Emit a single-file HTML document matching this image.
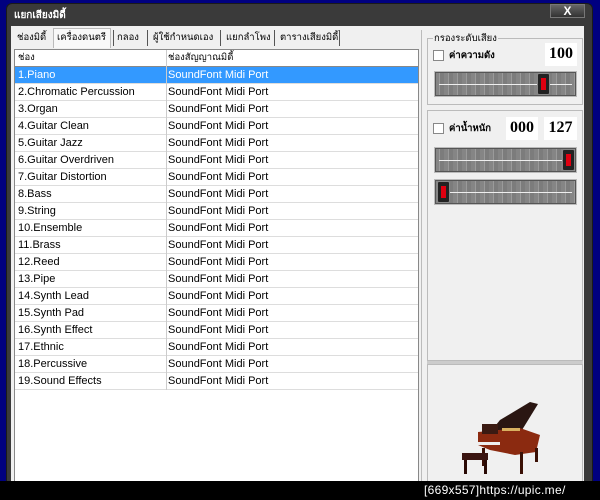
<!DOCTYPE html>
<html><head><meta charset="utf-8"><style>
*{margin:0;padding:0;box-sizing:border-box}
body{width:600px;height:500px;background:#000080;position:relative;overflow:hidden;font-family:"Liberation Sans","Noto Sans CJK SC",sans-serif;font-size:11px;color:#000}
.abs{position:absolute}
.th10{font-size:9.5px;white-space:nowrap}
#win{left:6px;top:3px;width:587px;height:490px;background:#3a3a3a;border-radius:6px 6px 0 0;border:1px solid #1a1a1a}
#title{left:14px;top:8px;color:#fff;font-weight:bold;font-size:10px}
#close{left:550px;top:4px;width:35px;height:14px;background:linear-gradient(#666,#333);border:1px solid #777;color:#fff;font-weight:bold;text-align:center;line-height:12px;font-size:12px}
#body{left:11px;top:26px;width:573px;height:460px;background:#f0f0f0}
.tab{top:31px;height:16px;line-height:14px}
.sep{top:30px;width:1px;height:16px;background:#555}
#list{left:14px;top:49px;width:405px;height:440px;background:#fff;border:1px solid #888}
.row{position:absolute;left:0;width:403px;height:17px;border-bottom:1px solid #ddd;line-height:16px}
.row span{position:absolute;left:3px}
.row b{position:absolute;left:151px;font-weight:normal;border-left:1px solid #ccc;padding-left:1px;height:17px;top:0}
.sel{background:#3399ff;color:#fff}
.grp{border:1px solid #bbb;background:#f0f0f0}
.num{background:#fff;font-family:"Liberation Serif",serif;font-weight:bold;font-size:16px;text-align:center;line-height:22px}
.sl{width:143px;height:26px;background:repeating-linear-gradient(90deg,#858585 0 4px,#9a9a9a 4px 5px,#7c7c7c 5px 9px);border:1px solid #bbb;box-shadow:inset 0 0 0 1px #555}
.sl:before{content:"";position:absolute;left:4px;right:4px;top:12px;height:1px;background:#eee}
.th{position:absolute;top:1px;width:13px;height:22px;background:#222;border:1px solid #888;border-radius:2px}
.th:after{content:"";position:absolute;left:3px;top:4px;width:5px;height:12px;background:#e00010}
.cb{width:11px;height:11px;background:#fff;border:1px solid #888}
</style></head><body>
<div id="win" class="abs"></div>
<div id="title" class="abs th10" style="font-size:10px">แยกเสียงมิดี้</div>
<div id="close" class="abs">X</div>
<div id="body" class="abs"></div>
<div class="abs tab th10" style="left:17px">ช่องมิดี้</div>
<div class="abs" style="left:53px;top:28px;width:58px;height:20px;background:#f8f8f8;border:1px solid #bbb;border-bottom:none"></div>
<div class="abs tab th10" style="left:57px">เครื่องดนตรี</div>
<div class="abs sep" style="left:113px"></div>
<div class="abs tab th10" style="left:117px">กลอง</div>
<div class="abs sep" style="left:147px"></div>
<div class="abs tab th10" style="left:153px">ผู้ใช้กำหนดเอง</div>
<div class="abs sep" style="left:220px"></div>
<div class="abs tab th10" style="left:226px">แยกลำโพง</div>
<div class="abs sep" style="left:274px"></div>
<div class="abs tab th10" style="left:280px">ตารางเสียงมิดี้</div>
<div class="abs sep" style="left:339px"></div>
<div id="list" class="abs">
<div class="row th10" style="top:0;background:#fff;border-bottom:1px solid #888"><span>ช่อง</span><b>ช่องสัญญาณมิดี้</b></div>
<div class="row sel" style="top:17px"><span>1.Piano</span><b>SoundFont Midi Port</b></div>
<div class="row" style="top:34px"><span>2.Chromatic Percussion</span><b>SoundFont Midi Port</b></div>
<div class="row" style="top:51px"><span>3.Organ</span><b>SoundFont Midi Port</b></div>
<div class="row" style="top:68px"><span>4.Guitar Clean</span><b>SoundFont Midi Port</b></div>
<div class="row" style="top:85px"><span>5.Guitar Jazz</span><b>SoundFont Midi Port</b></div>
<div class="row" style="top:102px"><span>6.Guitar Overdriven</span><b>SoundFont Midi Port</b></div>
<div class="row" style="top:119px"><span>7.Guitar Distortion</span><b>SoundFont Midi Port</b></div>
<div class="row" style="top:136px"><span>8.Bass</span><b>SoundFont Midi Port</b></div>
<div class="row" style="top:153px"><span>9.String</span><b>SoundFont Midi Port</b></div>
<div class="row" style="top:170px"><span>10.Ensemble</span><b>SoundFont Midi Port</b></div>
<div class="row" style="top:187px"><span>11.Brass</span><b>SoundFont Midi Port</b></div>
<div class="row" style="top:204px"><span>12.Reed</span><b>SoundFont Midi Port</b></div>
<div class="row" style="top:221px"><span>13.Pipe</span><b>SoundFont Midi Port</b></div>
<div class="row" style="top:238px"><span>14.Synth Lead</span><b>SoundFont Midi Port</b></div>
<div class="row" style="top:255px"><span>15.Synth Pad</span><b>SoundFont Midi Port</b></div>
<div class="row" style="top:272px"><span>16.Synth Effect</span><b>SoundFont Midi Port</b></div>
<div class="row" style="top:289px"><span>17.Ethnic</span><b>SoundFont Midi Port</b></div>
<div class="row" style="top:306px"><span>18.Percussive</span><b>SoundFont Midi Port</b></div>
<div class="row" style="top:323px"><span>19.Sound Effects</span><b>SoundFont Midi Port</b></div>
</div>
<div class="abs" style="left:421px;top:30px;width:1px;height:460px;background:#bbb"></div>
<div class="abs grp" style="left:427px;top:38px;width:156px;height:67px"></div>
<div class="abs th10" style="left:433px;top:31px;background:#f0f0f0;padding:0 1px">กรองระดับเสียง</div>
<div class="abs cb" style="left:433px;top:50px"></div>
<div class="abs th10" style="left:449px;top:48px;font-weight:bold">ค่าความดัง</div>
<div class="abs num" style="left:545px;top:43px;width:32px;height:23px">100</div>
<div class="abs sl" style="left:434px;top:71px"><div class="th" style="left:102px"></div></div>
<div class="abs grp" style="left:427px;top:110px;width:156px;height:251px"></div>
<div class="abs cb" style="left:433px;top:123px"></div>
<div class="abs th10" style="left:449px;top:121px;font-weight:bold">ค่าน้ำหนัก</div>
<div class="abs num" style="left:506px;top:117px;width:32px;height:23px">000</div>
<div class="abs num" style="left:544px;top:117px;width:33px;height:23px">127</div>
<div class="abs sl" style="left:434px;top:147px"><div class="th" style="left:127px"></div></div>
<div class="abs sl" style="left:434px;top:179px"><div class="th" style="left:2px"></div></div>
<div class="abs" style="left:427px;top:361px;width:156px;height:3px;background:#ccc"></div>
<div class="abs grp" style="left:427px;top:364px;width:156px;height:126px"></div>
<svg class="abs" style="left:460px;top:390px" width="90" height="90" viewBox="0 0 90 90">
<polygon points="40,30 70,12 78,14 62,40 32,40" fill="#2a1612"/>
<polygon points="18,42 60,38 80,45 76,62 55,65 30,60 18,55" fill="#8b2a10"/>
<rect x="22" y="34" width="16" height="10" fill="#3a1a12"/>
<rect x="18" y="52" width="22" height="3" fill="#eee"/>
<rect x="60" y="62" width="3" height="22" fill="#3a1005"/>
<rect x="75" y="58" width="3" height="14" fill="#3a1005"/>
<rect x="22" y="58" width="3" height="18" fill="#3a1005"/>
<rect x="2" y="63" width="26" height="7" fill="#3a1410"/>
<rect x="4" y="70" width="3" height="14" fill="#2a0a05"/>
<rect x="24" y="70" width="3" height="14" fill="#2a0a05"/>
<rect x="42" y="38" width="18" height="3" fill="#d8b060"/>
</svg>
<div class="abs" style="left:0;top:481px;width:600px;height:19px;background:#000"></div>
<div class="abs" style="left:424px;top:483px;color:#fff;font-family:'Liberation Sans',sans-serif;font-size:12px;letter-spacing:0.3px">[669x557]https://upic.me/</div>
</body></html>
